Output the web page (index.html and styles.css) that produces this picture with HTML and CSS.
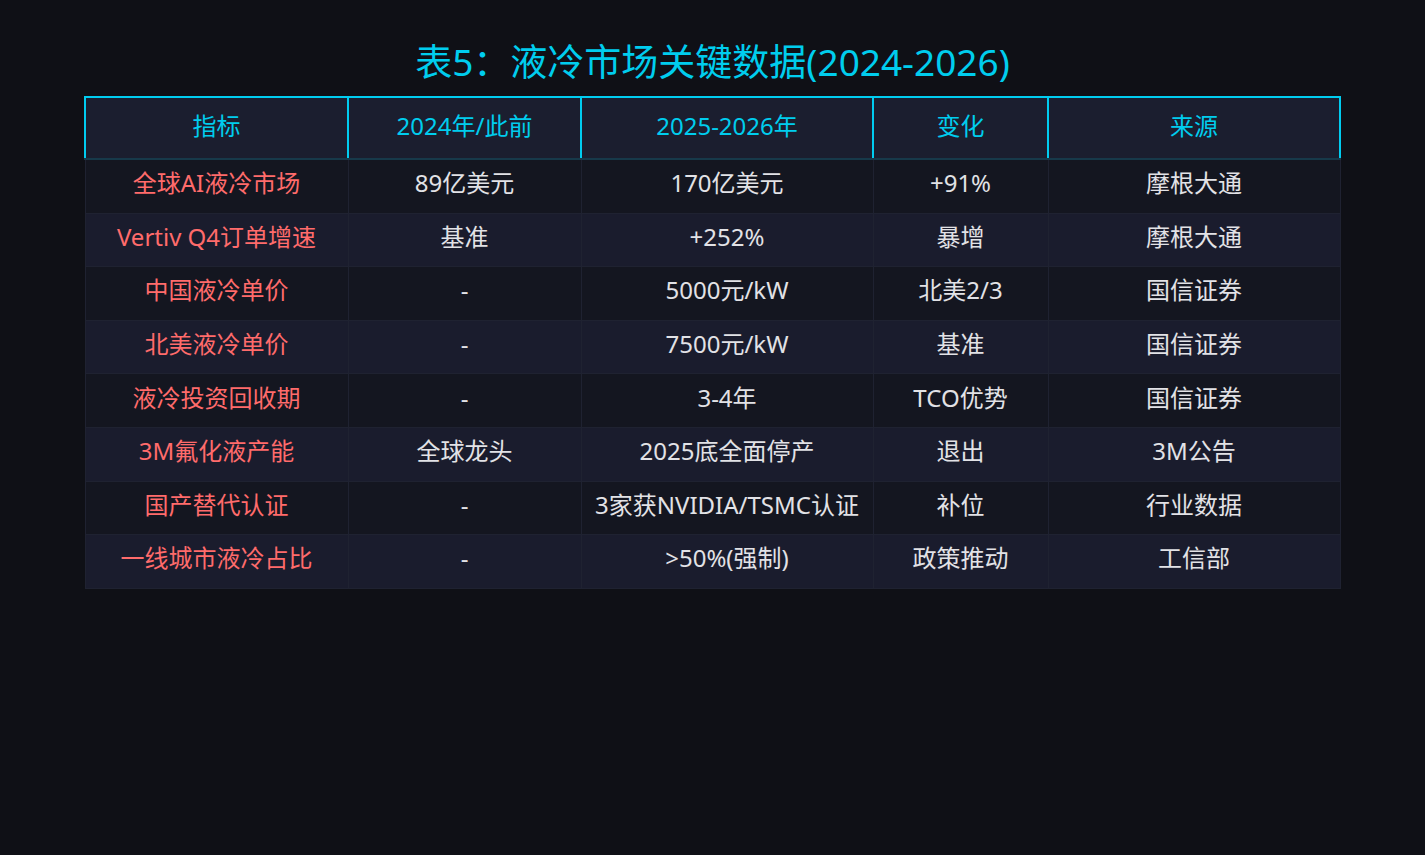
FILE: index.html
```html
<!DOCTYPE html>
<html lang="zh">
<head>
<meta charset="utf-8">
<link rel="stylesheet" href="styles.css">
</head>
<body>
<div class="page">
  <h1 class="title">表5：液冷市场关键数据(2024-2026)</h1>
  <table class="data">
    <colgroup>
      <col class="c1"><col class="c2"><col class="c3"><col class="c4"><col class="c5">
    </colgroup>
    <thead>
      <tr><th>指标</th><th>2024年/此前</th><th>2025-2026年</th><th>变化</th><th>来源</th></tr>
    </thead>
    <tbody>
      <tr><td class="key">全球AI液冷市场</td><td>89亿美元</td><td>170亿美元</td><td>+91%</td><td>摩根大通</td></tr>
      <tr><td class="key">Vertiv Q4订单增速</td><td>基准</td><td>+252%</td><td>暴增</td><td>摩根大通</td></tr>
      <tr><td class="key">中国液冷单价</td><td>-</td><td>5000元/kW</td><td>北美2/3</td><td>国信证券</td></tr>
      <tr><td class="key">北美液冷单价</td><td>-</td><td>7500元/kW</td><td>基准</td><td>国信证券</td></tr>
      <tr><td class="key">液冷投资回收期</td><td>-</td><td>3-4年</td><td>TCO优势</td><td>国信证券</td></tr>
      <tr><td class="key">3M氟化液产能</td><td>全球龙头</td><td>2025底全面停产</td><td>退出</td><td>3M公告</td></tr>
      <tr><td class="key">国产替代认证</td><td>-</td><td>3家获NVIDIA/TSMC认证</td><td>补位</td><td>行业数据</td></tr>
      <tr><td class="key">一线城市液冷占比</td><td>-</td><td>&gt;50%(强制)</td><td>政策推动</td><td>工信部</td></tr>
    </tbody>
  </table>
</div>
</body>
</html>
```

FILE: styles.css
```css
html, body {
  margin: 0;
  padding: 0;
  background: #0f1016;
}
body {
  font-family: "Noto Sans", "Noto Sans CJK SC", sans-serif;
  color: #e2e2e6;
}
.page {
  padding: 37px 84px 0 84px;
}
.title {
  margin: 0 0 9px 0;
  text-align: center;
  font-size: 37px;
  font-weight: 400;
  line-height: 50px;
  color: #00cdee;
}
.data {
  width: 100%;
  border-collapse: collapse;
  table-layout: fixed;
  font-size: 24px;
}
.c1 { width: 263px; }
.c2 { width: 233px; }
.c3 { width: 292px; }
.c4 { width: 175px; }
.c5 { width: auto; }
.data th {
  height: 52px;
  background: #1b1e2f;
  color: #00cdee;
  font-weight: 400;
  border: 2px solid #00ccf0;
  border-bottom: 2px solid #17394a;
  text-align: center;
  padding: 0 0 8px 0;
}
.data td {
  height: 46.6px;
  border: 1px solid #1f2231;
  text-align: center;
  padding: 0 0 6px 0;
  line-height: 30px;
}
.data tbody tr:nth-child(odd) td { background: #141620; }
.data tbody tr:nth-child(even) td { background: #1a1c2d; }
.data td.key { color: #ff6b6b; }
```
